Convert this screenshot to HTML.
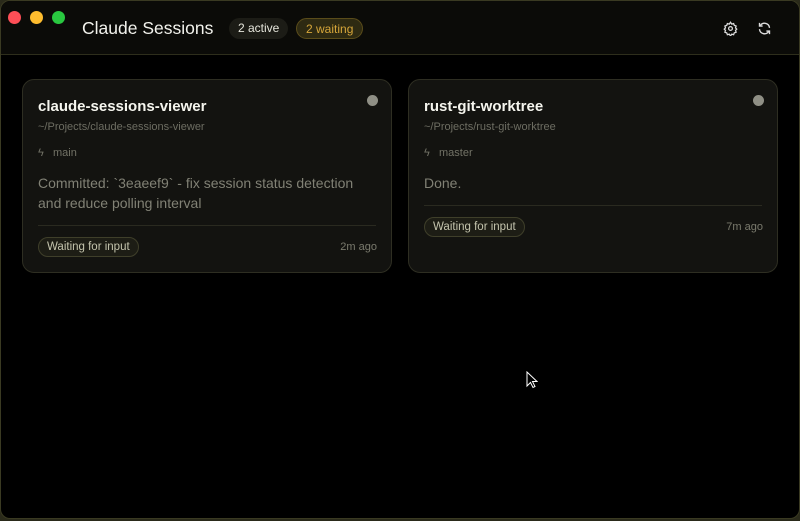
<!DOCTYPE html>
<html><head><style>
html,body{margin:0;padding:0;width:800px;height:521px;background:#2a2a1a;overflow:hidden;font-family:"Liberation Sans",sans-serif}
.win{position:absolute;left:0;top:0;width:800px;height:519px;background:#000;border-radius:10px;overflow:hidden;border:1px solid #3a3a22;box-sizing:border-box}
.title{position:absolute;left:0;top:0;width:100%;height:53px;background:#0b0b08;border-bottom:1px solid #2e2e1c}
.dot{position:absolute;top:10px;width:13px;height:13px;border-radius:50%}
.h{position:absolute;left:81px;top:17px;color:#f2f2ec;font-size:17.5px}
.pill{position:absolute;top:17px;height:21px;line-height:21px;border-radius:11px;font-size:12px;padding:0 9px;box-sizing:border-box}
.card{position:absolute;top:78px;width:370px;height:194px;background:#131310;border:1px solid #2e2e22;border-radius:12px;box-sizing:border-box}
.name{position:absolute;left:15px;top:18px;color:#f5f5ee;font-size:15px;font-weight:bold}
.path{position:absolute;left:15px;top:41px;color:#6d6d62;font-size:11px}
.br{position:absolute;left:15px;top:67px;color:#727266;font-size:11px}
.msg{position:absolute;left:15px;top:93px;color:#818175;font-size:14px;line-height:20px;width:330px}
.sep{position:absolute;left:15px;right:15px;top:145px;border-top:1px solid #2a2a20}
.stat{position:absolute;left:15px;top:157px;height:20px;line-height:19px;padding:0 8px;border:1px solid #3f3f2a;background:#1d1d15;border-radius:10px;color:#c4c4ad;font-size:11.5px;box-sizing:border-box}
.ago{position:absolute;right:14px;top:161px;color:#7a7a6d;font-size:11px}
.ind{position:absolute;right:13px;top:15px;width:11px;height:11px;border-radius:50%;background:#8f8f85}
</style></head><body>
<div class="win">
<div class="title">
<div class="dot" style="left:7px;background:#fe4f57"></div>
<div class="dot" style="left:29px;background:#febc2e"></div>
<div class="dot" style="left:51px;background:#29c840"></div>
<div class="h">Claude Sessions</div>
<div class="pill" style="left:228px;background:#1c1c16;color:#e6e6dc">2 active</div>
<div class="pill" style="left:295px;background:#2e2a12;border:1px solid #5a4c1a;color:#d6a63a">2 waiting</div>
<svg style="position:absolute;left:722px;top:20px" width="15" height="15" viewBox="0 0 24 24" fill="none" stroke="#ddd" stroke-width="2"><circle cx="12" cy="12" r="3"/><path d="M12 2l2 3 3-1 1 3 3 1-1 3 2 2-2 2 1 3-3 1-1 3-3-1-2 3-2-3-3 1-1-3-3-1 1-3-2-2 2-2-1-3 3-1 1-3 3 1z"/></svg>
<svg style="position:absolute;left:756px;top:20px" width="15" height="15" viewBox="0 0 24 24" fill="none" stroke="#ddd" stroke-width="2.2"><path d="M20 11A8 8 0 0 0 5.5 7M4 3v5h5M4 13a8 8 0 0 0 14.5 4M20 21v-5h-5"/></svg>
</div>
<div class="card" style="left:21px">
<div class="ind"></div>
<div class="name">claude-sessions-viewer</div>
<div class="path">~/Projects/claude-sessions-viewer</div>
<div class="br">ϟ&nbsp;&nbsp; main</div>
<div class="msg">Committed: `3eaeef9` - fix session status detection and reduce polling interval</div>
<div class="sep"></div>
<div class="stat">Waiting for input</div>
<div class="ago">2m ago</div>
</div>
<div class="card" style="left:407px">
<div class="ind"></div>
<div class="name">rust-git-worktree</div>
<div class="path">~/Projects/rust-git-worktree</div>
<div class="br">ϟ&nbsp;&nbsp; master</div>
<div class="msg">Done.</div>
<div class="sep" style="top:125px"></div>
<div class="stat" style="top:137px">Waiting for input</div>
<div class="ago" style="top:141px">7m ago</div>
</div>
<svg style="position:absolute;left:525px;top:370px" width="12" height="18" viewBox="0 0 12 18"><path d="M1 1v14l3.5-3.5 2.5 5 2-1-2.5-5H11z" fill="#000" stroke="#fff" stroke-width="1"/></svg>
</div>
</body></html>
